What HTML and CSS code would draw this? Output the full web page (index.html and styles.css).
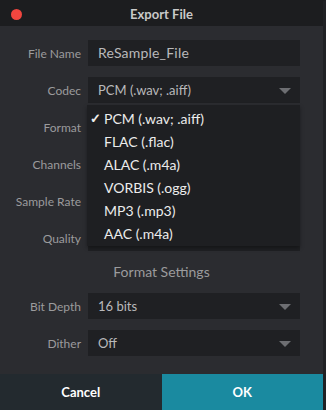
FILE: index.html
```html
<!DOCTYPE html>
<html lang="en">
<head>
    <meta charset="UTF-8">
    <title>Export File</title>
    <link rel="stylesheet" href="styles.css">
</head>
<body>
    <div class="window">
        <!-- title bar -->
        <div class="titlebar">
            <span class="close-dot"></span>
            <span class="title">Export File</span>
        </div>

        <div class="content">
            <div class="row">
                <label>File Name</label>
                <div class="field text">ReSample_File</div>
            </div>
            <div class="row codec-row">
                <label>Codec</label>
                <div class="field select">PCM (.wav; .aiff)<span class="arrow"></span></div>

                <!-- open codec menu -->
                <ul class="menu">
                    <li class="checked"><span class="check">&#10003;</span>PCM (.wav; .aiff)</li>
                    <li>FLAC (.flac)</li>
                    <li>ALAC (.m4a)</li>
                    <li>VORBIS (.ogg)</li>
                    <li>MP3 (.mp3)</li>
                    <li>AAC (.m4a)</li>
                </ul>
            </div>
            <div class="row">
                <label>Format</label>
                <div class="field select"><span class="arrow"></span></div>
            </div>
            <div class="row">
                <label>Channels</label>
                <div class="field select"><span class="arrow"></span></div>
            </div>
            <div class="row">
                <label>Sample Rate</label>
                <div class="field select"><span class="arrow"></span></div>
            </div>
            <div class="row">
                <label>Quality</label>
                <div class="field select"><span class="arrow"></span></div>
            </div>

            <h4 class="section-title">Format Settings</h4>

            <div class="row">
                <label>Bit Depth</label>
                <div class="field select">16 bits<span class="arrow"></span></div>
            </div>
            <div class="row">
                <label>Dither</label>
                <div class="field select">Off<span class="arrow"></span></div>
            </div>
        </div>

        <div class="footer">
            <button class="btn cancel">Cancel</button>
            <button class="btn ok">OK</button>
        </div>
    </div>
</body>
</html>
```
FILE: styles.css
```css
html, body {
    margin: 0;
    padding: 0;
    background-color: #1c1d1f;
}
body {
    font-family: "Lato", "Open Sans", Arial, sans-serif;
    font-size: 13px;
}
.window {
    width: 326px;
    height: 410px;
    display: flex;
    flex-direction: column;
    background-color: #2b2c30;
    box-sizing: border-box;
    border-top: 1px solid #1c1d1f;
    border-right: 3px solid #202124;
}
.titlebar {
    height: 25px;
    background-color: #1c1d1f;
    position: relative;
    display: flex;
    align-items: center;
    justify-content: center;
}
.close-dot {
    position: absolute;
    left: 11px;
    top: 8px;
    width: 11px;
    height: 11px;
    border-radius: 50%;
    background-color: #f1463f;
}
.title {
    color: #c9c9c9;
    font-weight: 700;
    font-size: 13px;
}
.content {
    flex: 1;
    padding-top: 14px;
    display: flex;
    flex-direction: column;
    gap: 11px;
}
.row {
    display: flex;
    align-items: center;
    gap: 7px;
    height: 26px;
}
.row label {
    width: 81px;
    text-align: right;
    color: #9b9b9d;
    font-size: 12px;
}
.field {
    width: 212px;
    height: 26px;
    line-height: 26px;
    background-color: #1f2023;
    color: #b9b9bb;
    padding-left: 10px;
    box-sizing: border-box;
    position: relative;
}
.field.text {
    font-size: 14px;
    letter-spacing: 0.2px;
}
.arrow {
    position: absolute;
    right: 9px;
    top: 11px;
    width: 0;
    height: 0;
    border-left: 6px solid transparent;
    border-right: 6px solid transparent;
    border-top: 6px solid #6d6e72;
}
.codec-row {
    position: relative;
}
.menu {
    position: absolute;
    left: 87px;
    top: 28px;
    width: 213px;
    margin: 0;
    padding: 2px 0 1px;
    list-style: none;
    background-color: #1e1f22;
    box-shadow: 0 2px 4px rgba(0,0,0,0.35);
    z-index: 2;
}
.menu li {
    height: 23px;
    line-height: 23px;
    padding-left: 17px;
    color: #ececec;
    font-size: 14px;
    position: relative;
}
.check {
    position: absolute;
    left: 3px;
    font-size: 13px;
    font-weight: 700;
}
.section-title {
    margin: 0;
    height: 20px;
    line-height: 20px;
    text-align: center;
    color: #9b9b9d;
    font-size: 14px;
    font-weight: 400;
}
.footer {
    display: flex;
    height: 36px;
}
.btn {
    flex: 1;
    border: none;
    margin: 0;
    color: white;
    font-family: inherit;
    font-size: 13px;
    font-weight: 700;
}
.cancel {
    background-color: #232a2f;
}
.ok {
    background-color: #1a8aa0;
}
```
